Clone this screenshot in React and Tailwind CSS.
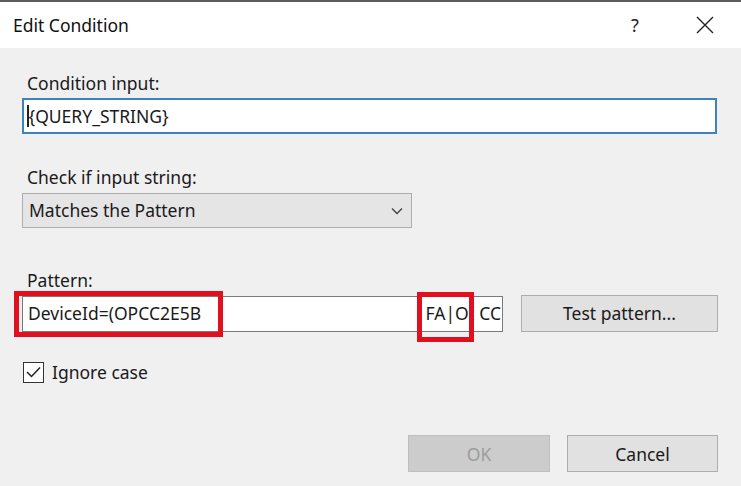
import React from "react";

const font = { fontFamily: '"Noto Sans", "Open Sans", Arial, sans-serif' };

function Button({ children, disabled, className = "" }) {
  return (
    <div
      className={`flex items-center justify-center h-[37px] border text-[17.5px] ${
        disabled
          ? "bg-[#cccccc] border-[#bfbfbf] text-[#9c9c9c]"
          : "bg-[#e1e1e1] border-[#adadad] text-[#1a1a1a]"
      } ${className}`}
    >
      {children}
    </div>
  );
}

export default function App() {
  return (
    <div className="w-[741px] h-[486px] bg-[#f0f0f0] flex flex-col overflow-hidden" style={font}>
      {/* Title bar */}
      <div className="h-[48px] bg-white border-t-2 border-[#5c5c5c] flex items-center">
        <div className="pl-[13px] text-[17.5px] text-[#111] flex-1">Edit Condition</div>
        <div className="w-[20px] text-center text-[18px] text-[#222] mr-[50px]">?</div>
        <svg width="20" height="20" viewBox="0 0 20 20" className="mr-[26px]">
          <path d="M2 2 L18 18 M18 2 L2 18" stroke="#222" strokeWidth="1.4" fill="none" />
        </svg>
      </div>

      {/* Body */}
      <div className="flex flex-col px-[22px] pt-[22px] text-[17.5px] text-[#1a1a1a]">
        <div className="pl-[5px] leading-[26px]">Condition input:</div>
        <div className="mt-[2px] w-[695px] h-[36px] bg-white border-2 border-[#3d83bf] flex items-center pl-[3px]">
          <span className="w-[1.5px] h-[22px] bg-[#222]" />
          <span>{"{QUERY_STRING}"}</span>
        </div>

        <div className="pl-[5px] mt-[30px] leading-[26px]">Check if input string:</div>
        <div className="mt-[3px] w-[390px] h-[35px] bg-[#e5e5e5] border border-[#adadad] flex items-center pl-[6px] pr-[8px]">
          <span className="flex-1">Matches the Pattern</span>
          <svg width="12" height="8" viewBox="0 0 12 8">
            <path d="M1 1.5 L6 6.5 L11 1.5" stroke="#444" strokeWidth="1.4" fill="none" />
          </svg>
        </div>

        <div className="pl-[5px] mt-[39px] leading-[26px]">Pattern:</div>
        <div className="mt-[2px] flex items-center">
          <div className="w-[481px] h-[36px] bg-white border border-[#7a7a7a] flex items-center overflow-hidden">
            <span className="pl-[5px] flex-1 whitespace-nowrap">DeviceId=(OPCC2E5B</span>
            <span className="whitespace-nowrap pr-[1px]">FA|OI CC</span>
          </div>
          <Button className="ml-[18px] w-[197px]">Test pattern...</Button>
        </div>

        <div className="mt-[27px] flex items-center">
          <div className="w-[21px] h-[21px] bg-white border border-[#333] flex items-center justify-center ml-[1px]">
            <svg width="15" height="12" viewBox="0 0 15 12">
              <path d="M1 6 L5.5 10.5 L14 1.5" stroke="#222" strokeWidth="1.5" fill="none" />
            </svg>
          </div>
          <span className="ml-[8px]">Ignore case</span>
        </div>

        <div className="mt-[50px] flex justify-end pr-[1px]">
          <Button disabled className="w-[142px]">OK</Button>
          <Button className="ml-[17px] w-[151px]">Cancel</Button>
        </div>
      </div>

      {/* Red annotation boxes */}
      <div className="absolute left-[14px] top-[291px] w-[209px] h-[46px] border-[5px] border-[#e0101e]" />
      <div className="absolute left-[417px] top-[292px] w-[57px] h-[50px] border-[5px] border-[#e0101e]" />
    </div>
  );
}
